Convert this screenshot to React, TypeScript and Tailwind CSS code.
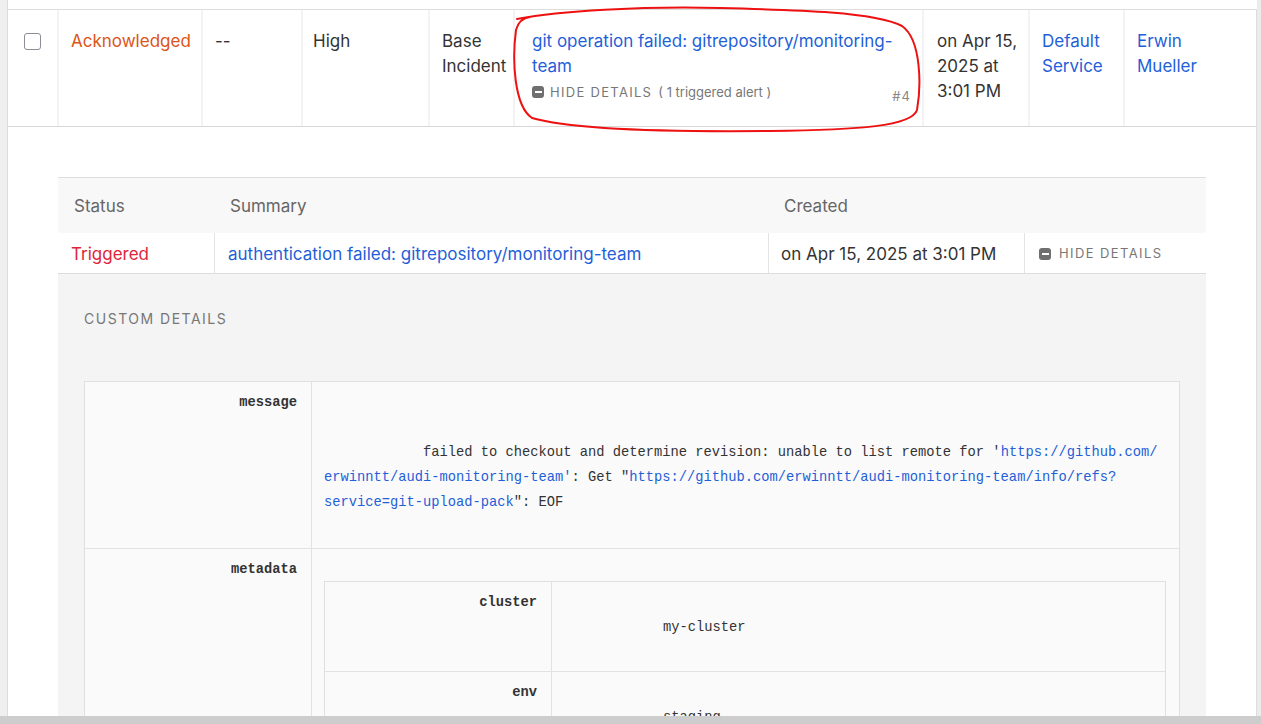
import React from "react";

const sans = { fontFamily: "Inter, Roboto, 'Noto Sans', sans-serif" };
const mono = { fontFamily: "'Liberation Mono', 'DejaVu Sans Mono', monospace" };

function HideIcon() {
  return (
    <span className="inline-flex h-[12px] w-[12px] items-center justify-center rounded-[3px] bg-[#6f6f6f]">
      <span className="h-[2px] w-[7px] bg-white" />
    </span>
  );
}

function Link({ children }: { children: React.ReactNode }) {
  return <span className="text-[#1f5fd8]">{children}</span>;
}

const PAD = "            ";

function KeyCell({ children }: { children: React.ReactNode }) {
  return (
    <div className="w-[227px] shrink-0 border-r border-[#e2e2e2] pt-2 pr-[14px] pl-3 text-right font-bold text-[#333]">
      {children}
    </div>
  );
}

// hand-drawn red marker loop around the incident title
function Scribble() {
  return (
    <svg className="pointer-events-none absolute top-0 left-0" width="1261" height="724" fill="none">
      <path
        d="M 517 19 C 560 11, 640 6, 720 8 C 800 10, 875 12, 902 26 C 922 40, 921 88, 917 110 C 912 126, 860 130, 770 131 C 670 132, 570 129, 532 118 C 514 106, 512 60, 516 30 C 518 22, 522 18, 530 17"
        stroke="#ee1111"
        strokeWidth="2"
        strokeLinecap="round"
      />
    </svg>
  );
}

export default function App() {
  return (
    <div className="relative flex h-[724px] w-[1261px] flex-col overflow-hidden bg-white" style={sans}>
      <div className="flex min-h-0 flex-1">
        {/* left gutter */}
        <div className="w-[8px] shrink-0 border-r border-[#dcdcdc] bg-[#efefef]" />

        {/* main */}
        <div className="flex min-w-0 flex-1 flex-col pt-[9px]">
          <div className="flex min-h-0 flex-1 flex-col border-t border-r border-[#dcdcdc]">
            {/* incident row */}
            <div className="flex h-[117px] shrink-0 border-b border-[#d8d8d8] text-[17px] leading-[25px] text-[#333]">
              <div className="flex w-[49px] shrink-0 justify-center pt-[23px]">
                <div className="h-[17px] w-[17px] rounded-[3px] border border-[#8d8d98] bg-white" />
              </div>
              <div className="w-[144px] shrink-0 border-l-2 border-[#f3f3f3] px-[12px] pt-[19px] text-[#dc5416]">
                Acknowledged
              </div>
              <div className="w-[100px] shrink-0 border-l-2 border-[#f3f3f3] px-[12px] pt-[19px]">--</div>
              <div className="w-[127px] shrink-0 border-l-2 border-[#f3f3f3] px-[10px] pt-[19px]">High</div>
              <div className="w-[85px] shrink-0 border-l-2 border-[#f3f3f3] pt-[19px] pr-[2px] pl-[12px]">
                Base Incident
              </div>
              <div className="flex w-[409px] shrink-0 flex-col border-l-2 border-[#f3f3f3] pt-[19px] pr-[11px] pl-[17px]">
                <div className="pr-2 text-[#1f5fd8]">git operation failed: gitrepository/monitoring-team</div>
                <div className="flex items-end justify-between">
                  <div className="flex items-center gap-[6px] leading-[24px]">
                    <HideIcon />
                    <span className="text-[13px] tracking-[1.3px] text-[#777]">HIDE DETAILS</span>
                    <span className="text-[13px] text-[#777]">( 1 triggered alert )</span>
                  </div>
                  <span className="translate-y-[5px] text-[13px] tracking-[1px] text-[#888]">#4</span>
                </div>
              </div>
              <div className="w-[106px] shrink-0 border-l-2 border-[#f3f3f3] pt-[19px] pr-[6px] pl-[13px]">
                on Apr 15, 2025 at 3:01 PM
              </div>
              <div className="w-[95px] shrink-0 border-l-2 border-[#f3f3f3] pt-[19px] pr-[6px] pl-[12px] text-[#1f5fd8]">
                Default Service
              </div>
              <div className="min-w-0 flex-1 border-l-2 border-[#f3f3f3] pt-[19px] pr-[30px] pl-[12px] text-[#1f5fd8]">
                Erwin Mueller
              </div>
            </div>

            {/* expanded details */}
            <div className="min-h-0 flex-1 pt-[50px] pr-[50px] pl-[50px]">
              <div className="flex h-full flex-col border-t border-[#dedede]">
                <div className="flex h-[55px] shrink-0 items-center bg-[#f8f8f8] pt-[2px] text-[17px] text-[#666]">
                  <div className="w-[156px] shrink-0 pl-[16px]">Status</div>
                  <div className="w-[554px] shrink-0 pl-[16px]">Summary</div>
                  <div className="pl-[16px]">Created</div>
                </div>
                <div className="flex h-[41px] shrink-0 border-b border-[#dcdcdc] bg-white text-[17px] text-[#333]">
                  <div className="flex w-[156px] shrink-0 items-center pt-[4px] pl-[13px] text-[#e0253b]">Triggered</div>
                  <div className="flex w-[554px] shrink-0 items-center border-l border-[#e4e4e4] pt-[4px] pl-[13px] text-[#1f5fd8]">
                    authentication failed: gitrepository/monitoring-team
                  </div>
                  <div className="flex w-[256px] shrink-0 items-center border-l border-[#e4e4e4] pt-[4px] pl-[12px]">
                    on Apr 15, 2025 at 3:01 PM
                  </div>
                  <div className="flex flex-1 items-center gap-[8px] border-l border-[#e4e4e4] pt-[2px] pl-[14px]">
                    <HideIcon />
                    <span className="text-[13px] tracking-[1.4px] text-[#777]">HIDE DETAILS</span>
                  </div>
                </div>

                <div className="min-h-0 flex-1 bg-[#f4f4f4] px-[26px] pt-[37px]">
                  <div className="text-[14px] leading-[16px] tracking-[1.5px] text-[#777]">CUSTOM DETAILS</div>

                  <div
                    className="mt-[54px] border border-[#e0e0e0] bg-[#fafafa] text-[13.75px] leading-[25px] text-[#333]"
                    style={mono}
                  >
                    <div className="flex border-b border-[#e2e2e2]">
                      <KeyCell>message</KeyCell>
                      <div className="min-w-0 flex-1 px-3 py-2 whitespace-pre">
                        <div>&nbsp;</div>
                        <div>&nbsp;</div>
                        <div>
                          {PAD}failed to checkout and determine revision: unable to list remote for '
                          <Link>https://github.com/</Link>
                        </div>
                        <div>
                          <Link>erwinntt/audi-monitoring-team'</Link>: Get "
                          <Link>https://github.com/erwinntt/audi-monitoring-team/info/refs?</Link>
                        </div>
                        <div>
                          <Link>service=git-upload-pack</Link>": EOF
                        </div>
                        <div>&nbsp;</div>
                      </div>
                    </div>

                    <div className="flex">
                      <KeyCell>metadata</KeyCell>
                      <div className="min-w-0 flex-1 pt-2 pr-[13px] pl-3">
                        <div className="h-[24px]" />
                        <div className="border border-[#e0e0e0] bg-[#fafafa]">
                          <div className="flex border-b border-[#e2e2e2]">
                            <KeyCell>cluster</KeyCell>
                            <div className="flex-1 px-3 pt-2 pb-[6px] whitespace-pre">
                              <div>&nbsp;</div>
                              <div>{PAD}my-cluster</div>
                              <div>&nbsp;</div>
                            </div>
                          </div>
                          <div className="flex">
                            <KeyCell>env</KeyCell>
                            <div className="flex-1 px-3 py-2 whitespace-pre">
                              <div>&nbsp;</div>
                              <div>{PAD}staging</div>
                              <div>&nbsp;</div>
                            </div>
                          </div>
                        </div>
                      </div>
                    </div>
                  </div>
                </div>
              </div>
            </div>
          </div>
        </div>

        {/* right gutter */}
        <div className="w-[4px] shrink-0 bg-[#ececec]" />
      </div>

      {/* bottom scrollbar track */}
      <div className="h-[8px] shrink-0 bg-[#cdcdcd]" />

      <Scribble />
    </div>
  );
}
